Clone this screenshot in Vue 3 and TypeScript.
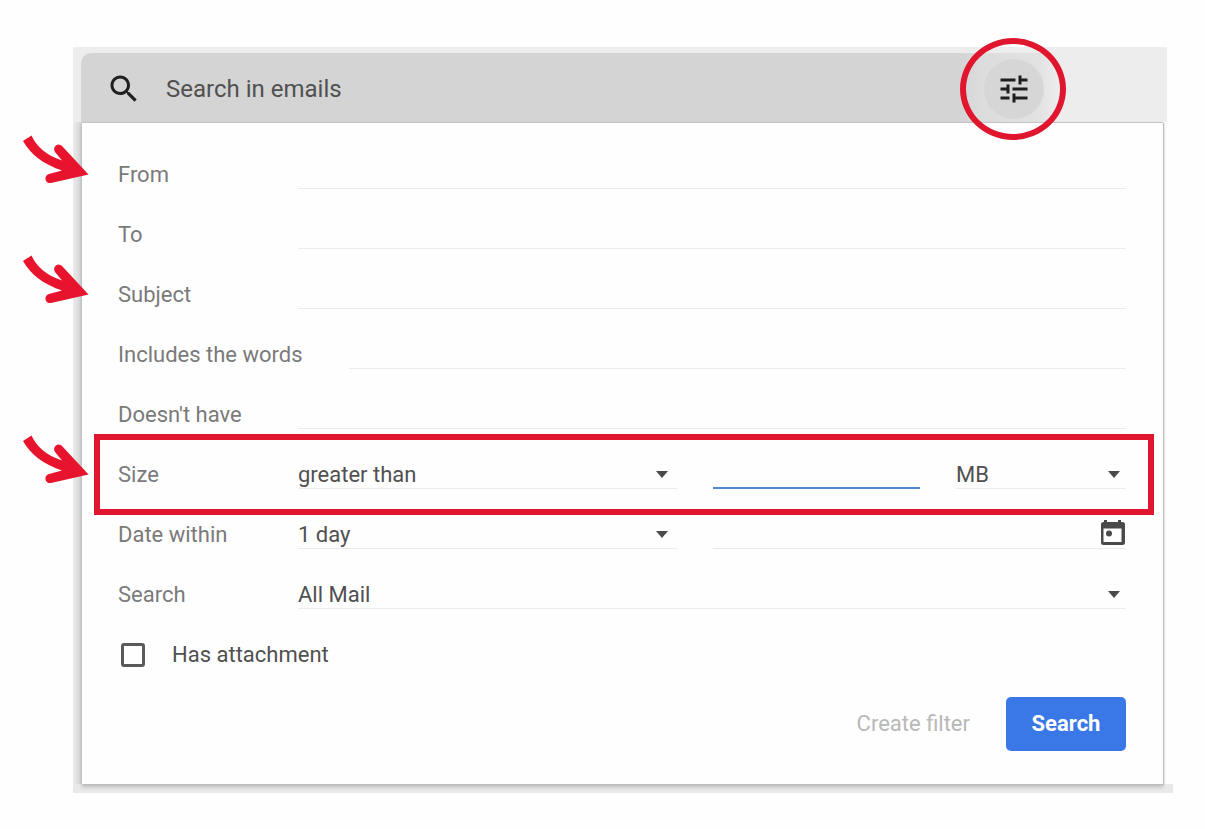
<script setup lang="ts">
import { reactive } from 'vue'

type TextKey = 'from' | 'to' | 'subject' | 'includes' | 'excludes'

interface TextRow {
  key: TextKey
  label: string
  marked: boolean
}

const textRows: TextRow[] = [
  { key: 'from', label: 'From', marked: true },
  { key: 'to', label: 'To', marked: false },
  { key: 'subject', label: 'Subject', marked: true },
  { key: 'includes', label: 'Includes the words', marked: false },
  { key: 'excludes', label: "Doesn't have", marked: false },
]

const form = reactive({
  query: '',
  from: '',
  to: '',
  subject: '',
  includes: '',
  excludes: '',
  comparison: 'greater than',
  size: '',
  unit: 'MB',
  within: '1 day',
  date: '',
  scope: 'All Mail',
  attachment: false,
})

const arrow =
  'M9.500 1.500C15 13 24 21 40 26.500L33 18A4.500 4.500 0 0 1 40.500 12.500L66.500 40.500 29 49A4.500 4.500 0 0 1 27 40L40 36.500C21 30 9 21 1 7Z'
</script>

<template>
  <main class="page">
    <form class="frame" @submit.prevent>
      <header class="band">
        <div class="bar">
          <svg class="icon" viewBox="0 0 24 24" aria-hidden="true">
            <path
              d="M15.500 14h-.79l-.28-.27C15.410 12.590 16 11.110 16 9.500 16 5.910 13.090 3 9.500 3S3 5.910 3 9.500 5.910 16 9.500 16c1.610 0 3.090-.59 4.230-1.570l.27.28v.79l5 4.990L20.490 19l-4.990-5zm-6 0C7.010 14 5 11.990 5 9.500S7.010 5 9.500 5 14 7.010 14 9.500 11.990 14 9.500 14z"
            />
          </svg>
          <input v-model="form.query" class="query" type="text" placeholder="Search in emails" aria-label="Search in emails" />
          <button class="tune" type="button" aria-label="Show search options">
            <svg class="icon" viewBox="0 0 24 24" aria-hidden="true">
              <path
                d="M3 17v2h6v-2H3zM3 5v2h10V5H3zm10 16v-2h8v-2h-8v-2h-2v6h2zM7 9v2H3v2h4v2h2V9H7zm14 4v-2H11v2h10zm-6-4h2V7h4V5h-4V3h-2v6z"
              />
            </svg>
            <span class="ring"></span>
          </button>
        </div>
      </header>

      <div class="backdrop">
        <section class="panel">
          <div v-for="row in textRows" :key="row.key" class="row">
            <svg v-if="row.marked" class="arrow" viewBox="0 0 68 51" aria-hidden="true">
              <path :d="arrow" />
            </svg>
            <label class="label" :for="row.key">{{ row.label }}</label>
            <input :id="row.key" v-model="form[row.key]" class="field" type="text" />
          </div>

          <div class="row">
            <svg class="arrow" viewBox="0 0 68 51" aria-hidden="true">
              <path :d="arrow" />
            </svg>
            <span class="outline"></span>
            <label class="label" for="comparison">Size</label>
            <div class="group size">
              <span class="select wide">
                <select id="comparison" v-model="form.comparison" class="field">
                  <option>greater than</option>
                  <option>less than</option>
                </select>
              </span>
              <input v-model="form.size" class="field active" type="text" aria-label="Size value" />
              <span class="select">
                <select v-model="form.unit" class="field" aria-label="Size unit">
                  <option>MB</option>
                  <option>KB</option>
                  <option>Bytes</option>
                </select>
              </span>
            </div>
          </div>

          <div class="row">
            <label class="label" for="within">Date within</label>
            <div class="group date">
              <span class="select wide">
                <select id="within" v-model="form.within" class="field">
                  <option>1 day</option>
                  <option>3 days</option>
                  <option>1 week</option>
                </select>
              </span>
              <span class="dated">
                <input v-model="form.date" class="field" type="text" aria-label="Date" />
                <button class="calendar" type="button" aria-label="Choose a date">
                  <svg viewBox="0 0 26 28" aria-hidden="true">
                    <path
                      fill-rule="evenodd"
                      d="M4 1h3v2h11V1h3v2h1.500a2.500 2.500 0 0 1 2.500 2.500v18a2.500 2.500 0 0 1-2.500 2.500H3.500A2.500 2.500 0 0 1 1 23.500v-18A2.500 2.500 0 0 1 3.500 3H4zM3.500 9.500v13.500h18V9.500z"
                    />
                    <circle cx="9" cy="14.500" r="3" />
                  </svg>
                </button>
              </span>
            </div>
          </div>

          <div class="row">
            <label class="label" for="scope">Search</label>
            <span class="select">
              <select id="scope" v-model="form.scope" class="field">
                <option>All Mail</option>
                <option>Inbox</option>
              </select>
            </span>
          </div>

          <label class="check">
            <input v-model="form.attachment" type="checkbox" />
            Has attachment
          </label>

          <footer class="actions">
            <button class="filter" type="button">Create filter</button>
            <button class="submit" type="submit">Search</button>
          </footer>
        </section>
      </div>
    </form>
  </main>
</template>

<style>
body {
  margin: 0;
  background: #fefefe;
}
</style>

<style scoped>
.page {
  box-sizing: border-box;
  padding: 47px 32px 36px 73px;
  font-family: Roboto, 'Liberation Sans', sans-serif;
  font-size: 22px;
  line-height: 28px;
  color: #505050;
}

.page * {
  box-sizing: border-box;
}

input,
select,
button {
  margin: 0;
  border: 0;
  padding: 0;
  border-radius: 0;
  background: none;
  font: inherit;
  color: inherit;
  outline: none;
}

.band {
  margin-right: 6px;
  padding: 6px 108px 0 8px;
  background: #ededed;
}

.bar {
  display: flex;
  align-items: center;
  height: 69px;
  padding: 3px 15px 0 25px;
  border-radius: 10px 0 0 0;
  background: linear-gradient(to right, #d4d4d4 0 calc(100% - 98px), #dcdcdc calc(100% - 80px), #e2e2e2 calc(100% - 20px), #ededed);
}

.icon {
  flex: none;
  display: block;
  width: 36px;
  height: 36px;
  fill: #1f1f1f;
}

.query {
  flex: 1;
  min-width: 0;
  margin-left: 24px;
  font-size: 24px;
  line-height: 32px;
}

.query::placeholder {
  color: #505050;
  opacity: 1;
}

.tune {
  position: relative;
  display: grid;
  place-items: center;
  width: 60px;
  height: 60px;
  border-radius: 50%;
  background: #d6d6d6;
}

.ring {
  position: absolute;
  inset: -21px -22px -21px -24px;
  border: 6px solid #e0162f;
  border-radius: 50%;
}

.backdrop {
  padding: 0 10px 9px 9px;
  background:
    linear-gradient(#e9e9e9, #e9e9e9) bottom / 100% 9px no-repeat,
    linear-gradient(to right, #ececec, #d2d2d2) left / 9px 100% no-repeat;
}

.panel {
  padding: 6px 37px 33px 36px;
  background: #fefefe;
  border-top: 1px solid #c4c4c4;
  box-shadow:
    1px 1px 1px #bcbcbc,
    0 3px 4px rgba(0, 0, 0, 0.2);
}

.row {
  position: relative;
  display: flex;
  align-items: flex-end;
  height: 60px;
}

.label {
  min-width: 180px;
  padding-right: 46px;
  line-height: 28px;
  color: #7a7a7a;
  white-space: nowrap;
}

.field {
  flex: 1;
  min-width: 0;
  width: 100%;
  height: 30px;
  padding-top: 2px;
  border-bottom: 1px solid #ebebeb;
  line-height: 27px;
}

.active {
  border-bottom: 2px solid #5288d0;
}

.group {
  flex: 1;
  display: grid;
  column-gap: 36px;
}

.size {
  grid-template-columns: 379fr 207fr 170fr;
}

.date {
  grid-template-columns: 379fr 413fr;
}

.select {
  position: relative;
  display: flex;
  flex: 1;
  min-width: 0;
}

.select::after {
  content: '';
  position: absolute;
  top: 12px;
  right: 6px;
  border: 6px solid transparent;
  border-top: 7px solid #4a4a4a;
  border-bottom: 0;
  pointer-events: none;
}

.select.wide::after {
  right: 9px;
}

select {
  appearance: none;
}

.dated {
  display: flex;
  border-bottom: 1px solid #ebebeb;
}

.dated .field {
  border: 0;
  height: 29px;
}

.calendar {
  width: 26px;
  height: 28px;
}

.calendar svg {
  display: block;
  width: 26px;
  height: 28px;
  fill: #4a4a4a;
}

.arrow {
  position: absolute;
  top: 5px;
  left: -96px;
  width: 68px;
  height: 51px;
  fill: #e8142e;
}

.outline {
  position: absolute;
  inset: 5px -28px -26px -24px;
  border: 6px solid #e0162f;
  pointer-events: none;
}

.check {
  display: flex;
  align-items: center;
  gap: 27px;
  width: fit-content;
  margin: 32px 0 0 3px;
}

.check input {
  appearance: none;
  width: 24px;
  height: 24px;
  border: 3px solid #5a5a5a;
  border-radius: 3px;
}

.check input:checked {
  background: #3b78e7;
}

.actions {
  display: flex;
  justify-content: flex-end;
  align-items: center;
  gap: 36px;
  margin-top: 28px;
}

.filter {
  color: #b8b8b8;
}

.submit {
  width: 120px;
  height: 54px;
  border-radius: 5px;
  background: #3b78e7;
  color: #fff;
  font-weight: 700;
}
</style>
